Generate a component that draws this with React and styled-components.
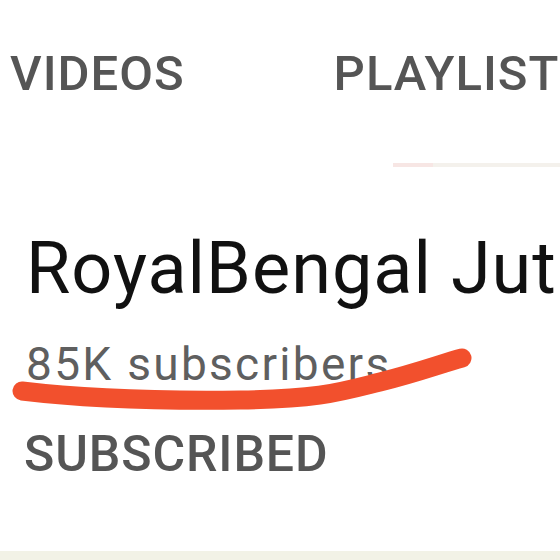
import React from "react";
import styled, { createGlobalStyle } from "styled-components";

const GlobalStyle = createGlobalStyle`
  html, body {
    margin: 0;
    padding: 0;
    background: #ffffff;
  }
  body {
    font-family: Roboto, "Liberation Sans", sans-serif;
    overflow: hidden;
  }
`;

const Page = styled.div`
  width: 560px;
  height: 560px;
  display: flex;
  flex-direction: column;
  background: #ffffff;
  overflow: hidden;
`;

const TabBar = styled.div`
  display: flex;
  flex-direction: row;
  gap: 149px;
  padding: 49px 0 0 10px;
  white-space: nowrap;
`;

const Tab = styled.div`
  font-size: 49px;
  line-height: 1;
  font-weight: 500;
  color: #555555;
  letter-spacing: 1px;
`;

const IndicatorTrack = styled.div`
  display: flex;
  padding: 65px 0 0 393px;
`;

const Indicator = styled.div`
  flex: 1;
  height: 4px;
  background: linear-gradient(90deg, #f7e6e4 0, #f7e6e4 40px, #f4f1ec 40px);
`;

const Channel = styled.div`
  display: flex;
  flex-direction: column;
  padding: 66px 0 0 26px;
`;

const Name = styled.h1`
  margin: 0;
  font-size: 72px;
  line-height: 1;
  font-weight: 400;
  color: #111111;
  letter-spacing: 1px;
  white-space: nowrap;
`;

const SubsRow = styled.div`
  position: relative;
  margin-top: 36px;
`;

const Subs = styled.div`
  position: relative;
  font-size: 46px;
  line-height: 1;
  color: #5f5f5f;
  letter-spacing: 2.3px;
  white-space: nowrap;
`;

const Scribble = styled.svg`
  position: absolute;
  left: -26px;
  top: 0;
  pointer-events: none;
`;

const SubscribeButton = styled.div`
  margin: 42px 0 0 -2px;
  font-size: 50px;
  line-height: 1;
  font-weight: 500;
  color: #555555;
  letter-spacing: 0.9px;
  white-space: nowrap;
`;

const Spacer = styled.div`
  flex: 1;
`;

const BottomStrip = styled.div`
  height: 9px;
  background: #f2f2e6;
`;

export default function App() {
  return (
    <Page>
      <GlobalStyle />
      <TabBar>
        <Tab>VIDEOS</Tab>
        <Tab>PLAYLISTS</Tab>
      </TabBar>
      <IndicatorTrack>
        <Indicator />
      </IndicatorTrack>
      <Channel>
        <Name>RoyalBengal Jute</Name>
        <SubsRow>
          <Subs>85K subscribers</Subs>
          <Scribble width="500" height="80" viewBox="0 0 500 80">
            <path
              d="M22 50 C 80 57, 160 60, 240 59 S 340 51, 380 41 S 440 23, 462 17"
              fill="none"
              stroke="#f2502d"
              strokeWidth="19"
              strokeLinecap="round"
            />
          </Scribble>
        </SubsRow>
        <SubscribeButton>SUBSCRIBED</SubscribeButton>
      </Channel>
      <Spacer />
      <BottomStrip />
    </Page>
  );
}
